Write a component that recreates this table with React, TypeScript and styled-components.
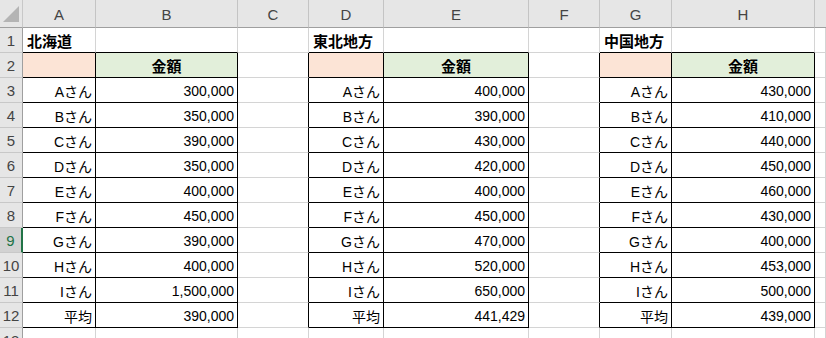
import React from "react";
import styled, { createGlobalStyle, css } from "styled-components";

const GlobalStyle = createGlobalStyle`
  html, body { margin: 0; padding: 0; background: #ffffff; overflow: hidden; }
  * { box-sizing: border-box; }
`;

const COLS = ["A", "B", "C", "D", "E", "F", "G", "H", "I"];
const WIDTHS = [73, 142, 71, 75, 145, 71, 72, 143];
const GRID = "#d4d4d4";
const HEAD_BG = "#e6e6e6";
const HEAD_LINE = "#9f9f9f";

const Sheet = styled.div`
  display: grid;
  grid-template-columns: 23px ${WIDTHS.map((w) => `${w}px`).join(" ")} 1fr;
  grid-template-rows: 28px repeat(13, 25px);
  width: 826px;
  height: 338px;
  overflow: hidden;
  font-family: "Liberation Sans", "Noto Sans CJK JP", sans-serif;
  font-size: 14px;
  color: #000;
`;

const Corner = styled.div`
  background: ${HEAD_BG};
  border-right: 1px solid #c8c8c8;
  border-bottom: 1px solid ${HEAD_LINE};
  display: flex;
  align-items: flex-end;
  justify-content: flex-end;
  padding: 0 3px 4px 0;
`;

const ColHeader = styled.div<{ $last?: boolean }>`
  background: ${HEAD_BG};
  border-bottom: 1px solid ${HEAD_LINE};
  border-right: ${(p) => (p.$last ? "none" : "1px solid #c4c4c4")};
  display: flex;
  align-items: center;
  justify-content: center;
  color: #444;
  font-size: 15px;
  padding-top: 1px;
`;

const RowHeader = styled.div<{ $selected?: boolean }>`
  background: ${(p) => (p.$selected ? "#d2d2d2" : HEAD_BG)};
  border-bottom: 1px solid #c8c8c8;
  border-right: ${(p) => (p.$selected ? "2px solid #217346" : `1px solid ${HEAD_LINE}`)};
  color: ${(p) => (p.$selected ? "#217346" : "#444")};
  display: flex;
  align-items: center;
  justify-content: center;
  font-size: 15px;
  padding-top: 1px;
  white-space: nowrap;
  overflow: hidden;
`;

type Align = "left" | "right" | "center";

const Cell = styled.div<{
  $align: Align;
  $bold?: boolean;
  $fill?: string;
  $rb: string;
  $bb: string;
}>`
  display: flex;
  align-items: center;
  justify-content: ${(p) =>
    p.$align === "left" ? "flex-start" : p.$align === "right" ? "flex-end" : "center"};
  padding: 1px 3px 0 3px;
  white-space: nowrap;
  overflow: visible;
  background: ${(p) => p.$fill || "#ffffff"};
  border-right: 1px solid ${(p) => p.$rb};
  border-bottom: 1px solid ${(p) => p.$bb};
  ${(p) =>
    p.$bold &&
    css`
      font-weight: bold;
      font-size: 15px;
    `}
`;

const Title = styled.span`
  position: relative;
  z-index: 1;
  padding-left: 1px;
`;

type Block = { title: string; col: number; values: string[]; avg: string };

const BLOCKS: Block[] = [
  {
    title: "北海道",
    col: 0,
    values: ["300,000", "350,000", "390,000", "350,000", "400,000", "450,000", "390,000", "400,000", "1,500,000"],
    avg: "390,000",
  },
  {
    title: "東北地方",
    col: 3,
    values: ["400,000", "390,000", "430,000", "420,000", "400,000", "450,000", "470,000", "520,000", "650,000"],
    avg: "441,429",
  },
  {
    title: "中国地方",
    col: 6,
    values: ["430,000", "410,000", "440,000", "450,000", "460,000", "430,000", "400,000", "453,000", "500,000"],
    avg: "439,000",
  },
];

const NAMES = ["Aさん", "Bさん", "Cさん", "Dさん", "Eさん", "Fさん", "Gさん", "Hさん", "Iさん"];

type CellData = { text: string; align: Align; bold?: boolean; fill?: string };

function inTable(row: number, col: number) {
  if (row < 2 || row > 12) return false;
  return BLOCKS.some((b) => col === b.col || col === b.col + 1);
}

function cellData(row: number, col: number): CellData {
  const block = BLOCKS.find((b) => col === b.col || col === b.col + 1);
  if (!block) return { text: "", align: "left" };
  const isName = col === block.col;
  if (row === 1) return isName ? { text: block.title, align: "left", bold: true } : { text: "", align: "left" };
  if (row === 2)
    return isName
      ? { text: "", align: "left", fill: "#fce4d6" }
      : { text: "金額", align: "center", bold: true, fill: "#e2efda" };
  if (row >= 3 && row <= 11) {
    const i = row - 3;
    return isName ? { text: NAMES[i], align: "right" } : { text: block.values[i], align: "right" };
  }
  if (row === 12) return isName ? { text: "平均", align: "right" } : { text: block.avg, align: "right" };
  return { text: "", align: "left" };
}

const TopLeft = () => (
  <svg width="17" height="17" viewBox="0 0 17 17">
    <polygon points="17,0 17,16 1,16" fill="#b4b4b4" />
  </svg>
);

export default function App() {
  const rows = Array.from({ length: 13 }, (_, i) => i + 1);
  return (
    <>
      <GlobalStyle />
      <Sheet>
        <Corner>
          <TopLeft />
        </Corner>
        {COLS.map((c, i) => (
          <ColHeader key={c} $last={i === COLS.length - 1}>
            {i < COLS.length - 1 ? c : ""}
          </ColHeader>
        ))}
        {rows.map((r) => (
          <React.Fragment key={r}>
            <RowHeader $selected={r === 9}>{r}</RowHeader>
            {COLS.map((_, c) => {
              const d = cellData(r, c);
              const rb = inTable(r, c) || inTable(r, c + 1) ? "#000" : GRID;
              const bb = inTable(r, c) || inTable(r + 1, c) ? "#000" : GRID;
              return (
                <Cell key={c} $align={d.align} $bold={d.bold} $fill={d.fill} $rb={rb} $bb={bb}>
                  {r === 1 && d.text ? <Title>{d.text}</Title> : d.text}
                </Cell>
              );
            })}
          </React.Fragment>
        ))}
      </Sheet>
    </>
  );
}
